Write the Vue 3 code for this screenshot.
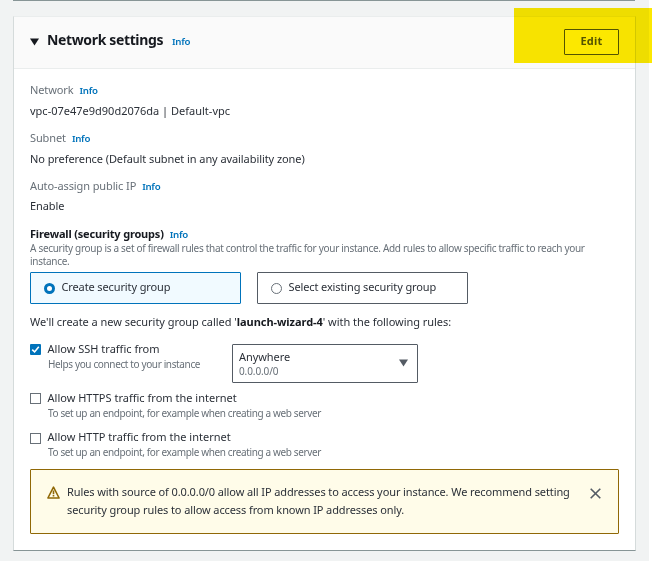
<script setup>
const details = [
  { key: 'network', label: 'Network', value: 'vpc-07e47e9d90d2076da | Default-vpc' },
  { key: 'subnet', label: 'Subnet', value: 'No preference (Default subnet in any availability zone)' },
  { key: 'ip', label: 'Auto-assign public IP', value: 'Enable' },
]
</script>

<template>
  <main class="page">
    <div class="previous"></div>
    <section class="card">
      <header class="head">
        <svg class="caret" viewBox="0 0 9 8" width="9" height="8"><path d="M0 .5h9L4.5 7.5z" fill="#16191f" /></svg>
        <h2>Network settings</h2>
        <a class="info">Info</a>
        <button class="edit">Edit</button>
        <div class="marker"></div>
      </header>
      <div class="body">
        <div v-for="d in details" :key="d.key" :class="['detail', d.key]">
          <div class="row"><span class="label">{{ d.label }}</span><a class="info">Info</a></div>
          <div class="value">{{ d.value }}</div>
        </div>
        <div class="row firewall"><strong>Firewall (security groups)</strong><a class="info">Info</a></div>
        <p class="desc">A security group is a set of firewall rules that control the traffic for your instance. Add rules to allow specific traffic to reach your<br />instance.</p>
        <div class="tiles">
          <div class="tile selected"><i class="radio"></i><span>Create security group</span></div>
          <div class="tile"><i class="radio"></i><span>Select existing security group</span></div>
        </div>
        <p class="note">We'll create a new security group called '<b>launch-wizard-4</b>' with the following rules:</p>
        <div class="rule ssh">
          <svg class="check" viewBox="0 0 11 11" width="11" height="11"><rect width="11" height="11" rx="1" fill="#0073bb" /><path d="M2.2 5.6l2.4 2.3 4.2-5.2" fill="none" stroke="#fff" stroke-width="1.6" /></svg>
          <div class="rule-text">
            <div class="title">Allow SSH traffic from</div>
            <div class="hint">Helps you connect to your instance</div>
          </div>
          <div class="dropdown">
            <div><div class="any">Anywhere</div><div class="cidr">0.0.0.0/0</div></div>
            <svg viewBox="0 0 9 8" width="9" height="8"><path d="M0 .5h9L4.5 7.5z" fill="#545b64" /></svg>
          </div>
        </div>
        <div class="rule https">
          <i class="check box"></i>
          <div class="rule-text">
            <div class="title">Allow HTTPS traffic from the internet</div>
            <div class="hint">To set up an endpoint, for example when creating a web server</div>
          </div>
        </div>
        <div class="rule http">
          <i class="check box"></i>
          <div class="rule-text">
            <div class="title">Allow HTTP traffic from the internet</div>
            <div class="hint">To set up an endpoint, for example when creating a web server</div>
          </div>
        </div>
        <div class="alert">
          <svg class="warn" viewBox="0 0 13 13" width="13" height="13"><path d="M6.5 1.2L12.1 12H.9z" fill="none" stroke="#906806" stroke-width="1.6" stroke-linejoin="round" /><path d="M6.5 4.6v3.6M6.5 9v1.6" stroke="#906806" stroke-width="1.6" /></svg>
          <p>Rules with source of 0.0.0.0/0 allow all IP addresses to access your instance. We recommend setting<br />security group rules to allow access from known IP addresses only.</p>
          <svg class="close" viewBox="0 0 11 11" width="11" height="11"><path d="M.7.7l9.6 9.6M10.3.7L.7 10.3" stroke="#545b64" stroke-width="1.6" /></svg>
        </div>
      </div>
    </section>
  </main>
</template>

<style>
body { background: #fff; overflow: hidden; }
</style>

<style scoped>
* { box-sizing: border-box; }
.page { width: 649px; height: 561px; background: #f1f3f3; padding: 0 14px 0 13px; font: 11px/18px "Noto Sans", "Open Sans", sans-serif; letter-spacing: -.07px; color: #2b3038; white-space: nowrap; }
.previous { height: 1px; background: #879596; margin-bottom: 15px; }
.card { height: 535px; width: 623px; background: #fff; border: 1px solid #d5dbdb; border-top-color: #eaeded; border-bottom-color: #879596; }
.head { position: relative; height: 52px; display: flex; align-items: center; padding: 0 16px; background: #fafafa; border-bottom: 1px solid #eaeded; }
.caret { margin: 0 8px 2px 0; }
h2 { margin: 0; width: 125px; font-size: 14px; line-height: 20px; font-weight: 700; color: #16191f; letter-spacing: -.36px; padding-bottom: 5px; }
.info { color: #0073bb; font-size: 9.7px; font-weight: 600; letter-spacing: -.3px; }
.head .info { margin-bottom: 2px; }
.row .info { padding-top: 1px; }
.edit { margin: 0 0 2px auto; width: 55px; height: 26px; border: 1px solid #545b64; border-radius: 1px; background: #fff; color: #545b64; padding: 0 0 1px; font: 700 11px/20px "Noto Sans", sans-serif; letter-spacing: .2px; }
.marker { position: absolute; left: 500px; top: -9px; width: 138px; height: 55px; background: #fce800; mix-blend-mode: multiply; }
.body { padding: 12px 16px 0; }
.row { display: flex; gap: 6px; height: 18px; }
.label { color: #687078; letter-spacing: -.11px; }
.detail { height: 48px; }
.value { margin-top: 3px; letter-spacing: -.08px; }
.network .value { letter-spacing: 0; }
.ip .value { margin-top: 2px; }
.firewall strong { color: #16191f; letter-spacing: -.18px; }
.desc { margin: -1px 0 4px; font-size: 10px; line-height: 13px; color: #687078; letter-spacing: -.3px; }
.tiles { display: flex; gap: 16px; }
.tile { width: 211px; height: 32px; border: 1px solid #545b64; border-radius: 1px; display: flex; align-items: center; padding-left: 13px; gap: 7px; }
.tile span { margin: 0 0 2px -.5px; letter-spacing: -.12px; }
.radio { width: 11px; height: 11px; border: 1px solid #687078; border-radius: 50%; background: #fff; }
.tile.selected { background: #f1faff; border-color: #0073bb; }
.selected .radio { border: 3.5px solid #0073bb; }
.note { margin: 9px 0; letter-spacing: -.04px; }
.note b { color: #16191f; }
.rule { display: flex; align-items: flex-start; }
.check { width: 11px; height: 11px; margin: 4px 7px 0 0; flex: none; }
.box { border: 1px solid #687078; background: #fff; }
.rule-text { width: 184px; }
.title { letter-spacing: .01px; margin-left: -.5px; }
.ssh { height: 49px; }
.https { height: 39px; }
.http { height: 41px; }
.http .check { margin-top: 5px; }
.hint { font-size: 10px; line-height: 13px; color: #687078; letter-spacing: -.37px; }
.dropdown { width: 186px; height: 39px; border: 1px solid #545b64; border-radius: 1px; margin-top: 4px; padding: 4px 9px 0 6px; display: flex; justify-content: space-between; }
.dropdown svg { margin-top: 10px; }
.any { line-height: 16px; letter-spacing: -.07px; }
.cidr { font-size: 10px; line-height: 13px; color: #687078; letter-spacing: -.1px; }
.alert { height: 65px; border: 1px solid #906806; border-radius: 1px; background: #fffce9; display: flex; padding: 13px 17px 0 16px; }
.alert p { margin: 0; letter-spacing: -.1px; }
.warn { margin: 3px 7px 0 0; }
.close { margin: 5px 0 0 auto; }
</style>
